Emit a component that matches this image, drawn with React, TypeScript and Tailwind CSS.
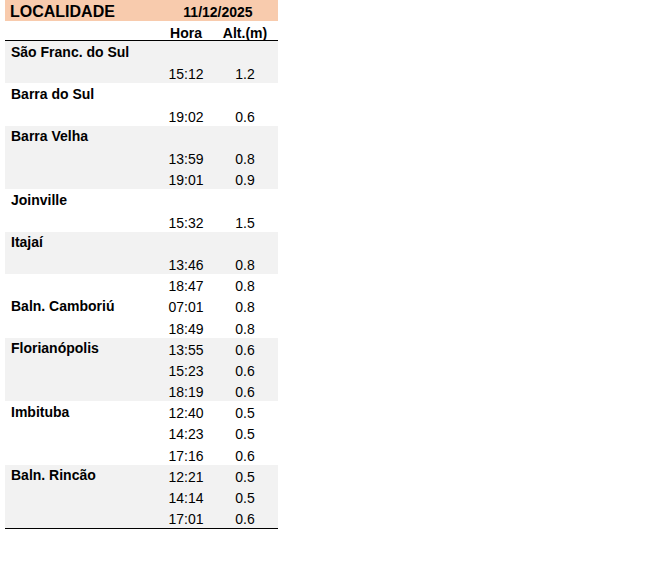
type Group = { name: string; nameRow: number; rows: [string, string][]; gray: boolean };

const groups: Group[] = [
  { name: "São Franc. do Sul", nameRow: 0, rows: [["", ""], ["15:12", "1.2"]], gray: true },
  { name: "Barra do Sul", nameRow: 0, rows: [["", ""], ["19:02", "0.6"]], gray: false },
  { name: "Barra Velha", nameRow: 0, rows: [["", ""], ["13:59", "0.8"], ["19:01", "0.9"]], gray: true },
  { name: "Joinville", nameRow: 0, rows: [["", ""], ["15:32", "1.5"]], gray: false },
  { name: "Itajaí", nameRow: 0, rows: [["", ""], ["13:46", "0.8"]], gray: true },
  { name: "Baln. Camboriú", nameRow: 1, rows: [["18:47", "0.8"], ["07:01", "0.8"], ["18:49", "0.8"]], gray: false },
  { name: "Florianópolis", nameRow: 0, rows: [["13:55", "0.6"], ["15:23", "0.6"], ["18:19", "0.6"]], gray: true },
  { name: "Imbituba", nameRow: 0, rows: [["12:40", "0.5"], ["14:23", "0.5"], ["17:16", "0.6"]], gray: false },
  { name: "Baln. Rincão", nameRow: 0, rows: [["12:21", "0.5"], ["14:14", "0.5"], ["17:01", "0.6"]], gray: true },
];

export default function App() {
  return (
    <div className="w-[656px] h-[562px] bg-white text-black font-['Liberation_Sans',Arial,sans-serif]">
      <div className="ml-[5px] w-[273px]">
        {/* title bar */}
        <div className="h-[21px] pt-[2px] bg-[#f8cbad] flex items-center">
          <div className="w-[155px] pl-[5px] text-[16px] font-bold leading-none">LOCALIDADE</div>
          <div className="flex-1 text-center text-[14px] font-bold leading-none pr-[2px]">11/12/2025</div>
        </div>
        <div className="h-[20px] border-b border-black grid grid-cols-[155px_52px_66px] items-end text-[14px] leading-none font-bold">
          <div />
          <div className="text-center">Hora</div>
          <div className="text-center">Alt.(m)</div>
        </div>

        <div className="border-b border-black">
          {groups.map((g) => (
            <div key={g.name} className={g.gray ? "bg-[#f2f2f2]" : "bg-white"}>
              {g.rows.map(([hora, alt], i) => (
                <div key={i} className="h-[21.2px] grid grid-cols-[155px_52px_66px] items-center text-[14px] leading-none">
                  <div className="pl-[6px] font-bold whitespace-nowrap">{i === g.nameRow ? g.name : ""}</div>
                  <div className="text-center pt-[3px]">{hora}</div>
                  <div className="text-center pt-[3px]">{alt}</div>
                </div>
              ))}
            </div>
          ))}
        </div>
      </div>
    </div>
  );
}
